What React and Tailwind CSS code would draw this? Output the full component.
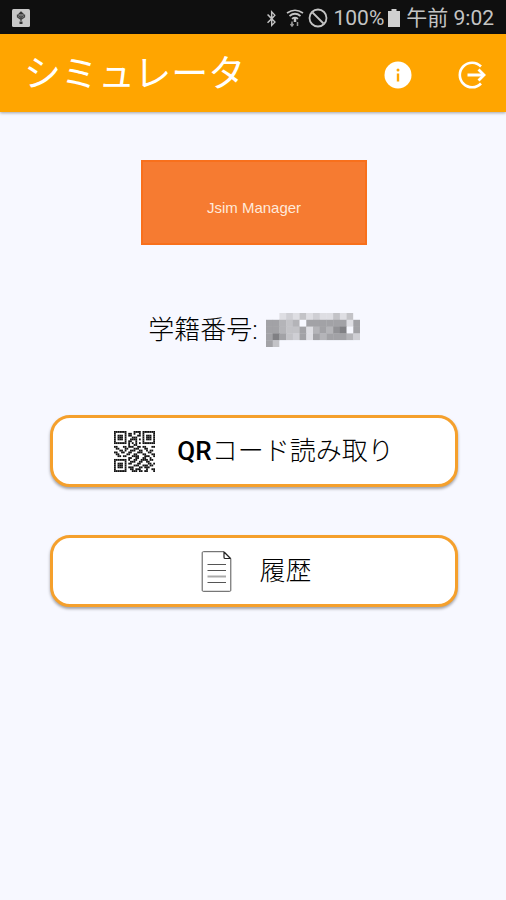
import { FaBluetoothB } from "react-icons/fa";

const QR_ROWS = [
  "11111110000111101111111",
  "10000010110100101000001",
  "10111010110001101011101",
  "10111010001110001011101",
  "10111010011110101011101",
  "10000010110010001000001",
  "11111110101010101111111",
  "00000000100110000000000",
  "11000110111001101100011",
  "01100011000111000110000",
  "00011010011100110010110",
  "11001100110001110001100",
  "01100001100110001100011",
  "00110110001111000111001",
  "00000000110011001100100",
  "11111110100110011110110",
  "10000010011100110011000",
  "10111010110001100001101",
  "10111010000111001110110",
  "10111010111000110111000",
  "10000010011011100010011",
  "11111110001110110110001",
  "00000000110001001001100",
];

const MOSAIC_ROWS = [
  "00121312113130",
  "55434055555515",
  "55433514546705",
  "57532515455542",
  "53000000000000",
];
const MOSAIC_SHADES = ["#f7f8ff", "#dedee3", "#cfcfd4", "#c3c3c7", "#b4b4b8", "#a2a2a6", "#929296", "#808084"];

const toCells = (rows) =>
  rows.flatMap((row, y) => [...row].map((value, x) => ({ x, y, value: Number(value) })));

const QrIcon = () => (
  <svg viewBox="0 0 23 22" className="size-[41px]" preserveAspectRatio="none" aria-hidden="true">
    {toCells(QR_ROWS.slice(0, 22))
      .filter((cell) => cell.value)
      .map(({ x, y }) => (
        <rect key={`${x}-${y}`} x={x} y={y} width="1" height="1" fill="#111" />
      ))}
  </svg>
);

const DocumentIcon = () => (
  <svg viewBox="0 0 41 41" className="size-[41px]" fill="none" stroke="#555" aria-hidden="true">
    <path d="M7.500.7h20.500l6.800 7v31.600q0 1-1 1H7.200q-1 0-1-1V1.700q0-1 1.300-1z" />
    <path d="M28 .7v5.500q0 1.300 1.300 1.300h5.500M28 1l6.500 6.500" stroke="#222" strokeWidth="1.200" />
    <path d="M11.500 13.500h18.500M11.500 19.500h18.500M11.500 31.500h18.500" />
    <path d="M11.500 25.500h18.500" stroke="#aaa" strokeWidth="2" />
  </svg>
);

const StatusBar = () => (
  <div className="flex h-[34px] items-center justify-between bg-[#0f0f0f] px-3 pt-0.5 text-[#c4c4c4]">
    <svg viewBox="0 0 18 18" className="size-[18px]" aria-label="USB">
      <rect width="18" height="18" rx="1.500" fill="#c8c8c8" />
      <g fill="none" stroke="#444" strokeWidth="1.300">
        <path d="M9 12V3M5.500 5.500v2.500L9 10.500l3.500-2.500V5.500" />
        <circle cx="9" cy="6" r="2.200" />
      </g>
      <path d="M9 2 7 5h4zM7.500 12.500h3v2.500h-3z" fill="#333" />
    </svg>
    <div className="flex items-center">
      <FaBluetoothB size={17} aria-label="Bluetooth" />
      <svg viewBox="0 0 18 18" className="ml-1.5 size-[18px]" fill="none" stroke="currentColor" strokeWidth="1.700" aria-label="Wi-Fi">
        <path d="M1 4q8-5.500 16 0M3.500 7q5.500-4.500 11 0M6 9.800q3-2.500 6 0" />
        <path d="M9 9v4" strokeWidth="2.500" />
        <path d="M6 17v-4.500m-1.500 2.500L6 17l1.500-2M11.500 13v4" stroke="#999" strokeWidth="1.500" />
      </svg>
      <svg viewBox="0 0 20 20" className="ml-1 size-5" fill="none" stroke="currentColor" strokeWidth="1.800" aria-label="通知オフ">
        <circle cx="10" cy="10" r="8.500" />
        <path d="m4.500 4.500 11 11" />
      </svg>
      <span className="ml-1.5 text-[21px] leading-6">100%</span>
      <svg viewBox="0 0 12 18" className="ml-1 h-[18px] w-3" fill="#d0d0d0" aria-hidden="true">
        <path d="M3.500 0h5v2H12v16H0V2h3.500z" />
      </svg>
      <span className="ml-1.5 text-[21px] leading-6">午前 9:02</span>
    </div>
  </div>
);

const AppHeader = () => (
  <header className="relative flex h-[78px] items-center justify-between bg-[#ffa500] pt-1 pr-5 pl-6 text-white shadow-[0_1px_3px_rgba(0,0,0,0.35)]">
    <h1 className="text-[37px] leading-10">シミュレータ</h1>
    <div className="flex items-center gap-[46px]">
      <button type="button" aria-label="情報">
        <svg viewBox="0 0 28 28" className="size-7">
          <circle cx="14" cy="14" r="13.500" fill="#fff" />
          <circle cx="14" cy="9" r="1.500" fill="#ffa500" />
          <path d="M12.800 12.500h2.400v8h-2.400z" fill="#ffa500" />
        </svg>
      </button>
      <button type="button" aria-label="ログアウト">
        <svg viewBox="0 0 28 28" className="size-7" fill="none" stroke="#fff" strokeWidth="2.600">
          <path d="M23 5.500A12.300 12.300 0 1 0 23 22.500" />
          <path d="M9.500 14H25" strokeWidth="3" />
          <path d="m20.500 8.500 5.500 5.500-5.500 5.500" strokeWidth="2.800" />
        </svg>
      </button>
    </div>
  </header>
);

const MenuButton = ({ icon, children }) => (
  <button
    type="button"
    className="flex h-[72px] w-full items-center justify-center gap-[22px] rounded-[20px] border-[3px] border-[#f5a02c] bg-white text-[26px] leading-8 text-black shadow-[0_2px_3px_rgba(0,0,0,0.35)]"
  >
    {icon}
    <span className="font-light">{children}</span>
  </button>
);

const App = () => (
  <div className="min-h-screen bg-[#f7f8ff] font-['Roboto','Noto_Sans_CJK_JP',sans-serif]">
    <StatusBar />
    <AppHeader />
    <main className="flex flex-col items-center pt-12 pr-12 pl-[50px]">
      <div className="flex h-[85px] w-[226px] items-center justify-center border-2 border-[#f8701c] bg-[#f67b31] pt-3 font-['Liberation_Sans',sans-serif] text-[15px] text-[#ffe9da]">
        Jsim Manager
      </div>
      <div className="mt-[68px] flex items-center gap-2 text-[26px] leading-8 font-light text-black">
        <span>学籍番号:</span>
        <svg viewBox="0 0 14 5" className="h-[34px] w-[94px]" preserveAspectRatio="none" role="img" aria-label="非表示">
          {toCells(MOSAIC_ROWS).map(({ x, y, value }) => (
            <rect key={`${x}-${y}`} x={x} y={y} width="1.050" height="1.050" fill={MOSAIC_SHADES[value]} />
          ))}
        </svg>
      </div>
      <div className="mt-[68px] flex w-full flex-col gap-12">
        <MenuButton icon={<QrIcon />}>
          <b className="font-medium">QR</b>コード読み取り
        </MenuButton>
        <MenuButton icon={<DocumentIcon />}>履歴</MenuButton>
      </div>
    </main>
  </div>
);

export default App;
